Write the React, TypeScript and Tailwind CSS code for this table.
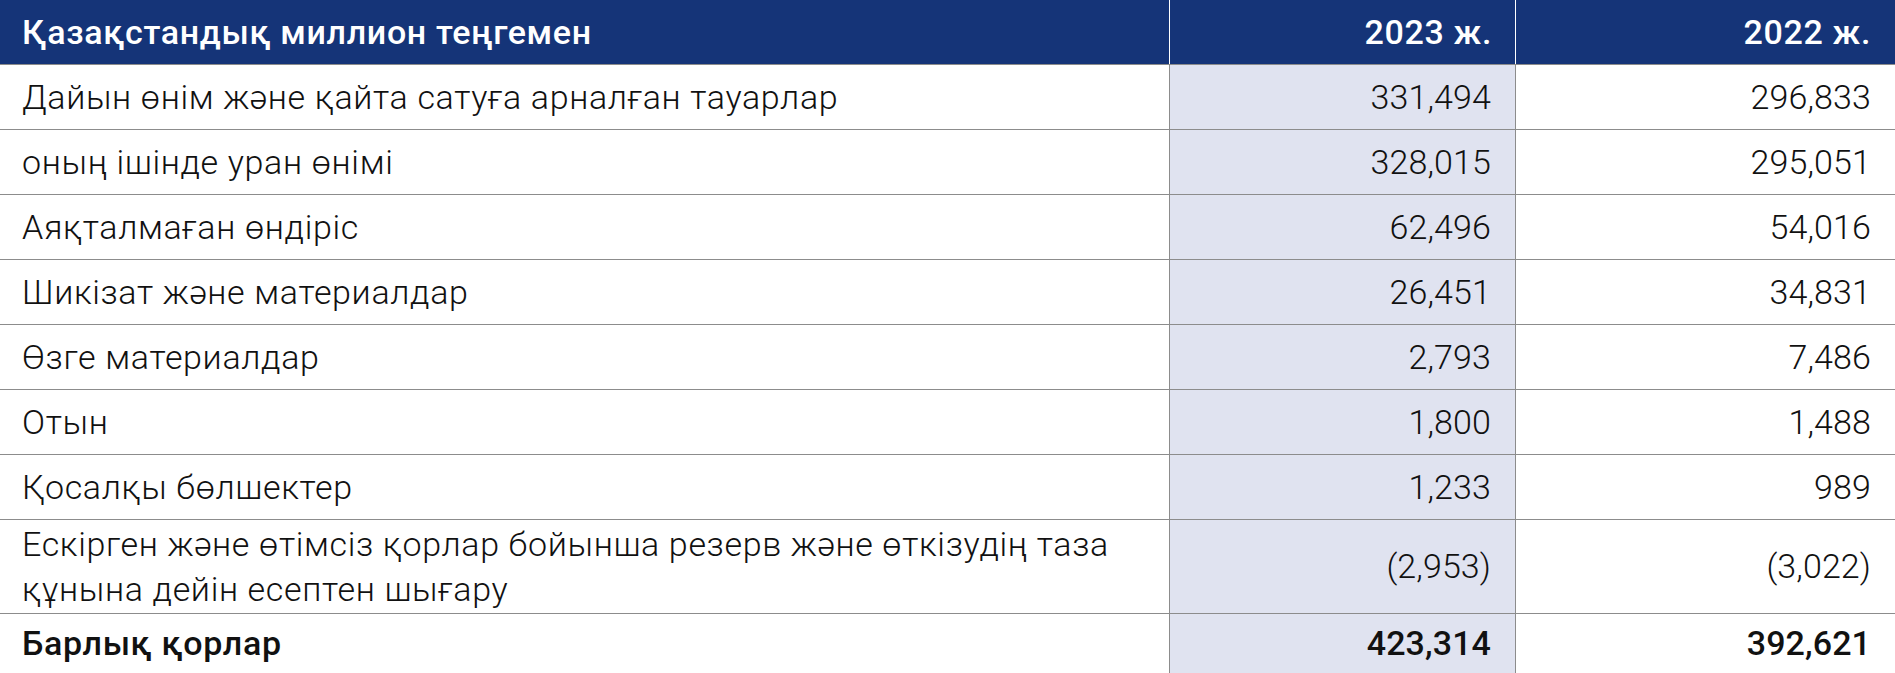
const ROWS = [
  { label: "Дайын өнім және қайта сатуға арналған тауарлар", y2023: "331,494", y2022: "296,833" },
  { label: "оның ішінде уран өнімі", y2023: "328,015", y2022: "295,051" },
  { label: "Аяқталмаған өндіріс", y2023: "62,496", y2022: "54,016" },
  { label: "Шикізат және материалдар", y2023: "26,451", y2022: "34,831" },
  { label: "Өзге материалдар", y2023: "2,793", y2022: "7,486" },
  { label: "Отын", y2023: "1,800", y2022: "1,488" },
  { label: "Қосалқы бөлшектер", y2023: "1,233", y2022: "989" },
];

const grid = "grid grid-cols-[1169px_346px_1fr]";

export default function App() {
  return (
    <div className="w-full bg-white font-['Roboto',sans-serif] text-[34px] leading-[45px] tracking-[0.65px] text-[#111]">
      <div className={`${grid} h-[65px] bg-[#153478] font-medium text-white border-b border-[#8c8c8c]`}>
        <div className="flex items-center pl-[22px]">Қазақстандық миллион теңгемен</div>
        <div className="flex items-center justify-end border-l border-white pr-[23px]">2023 ж.</div>
        <div className="flex items-center justify-end border-l border-white pr-[24px]">2022 ж.</div>
      </div>

      {ROWS.map((r) => (
        <div key={r.label} className={`${grid} h-[65px] border-b border-[#8c8c8c] font-light`}>
          <div className="flex items-center pl-[22px]">{r.label}</div>
          <div className="flex items-center justify-end border-l border-[#8c8c8c] bg-[#e0e3f0] pr-[24px] tracking-[0.1px]">
            {r.y2023}
          </div>
          <div className="flex items-center justify-end border-l border-[#8c8c8c] pr-[24px] tracking-[0.1px]">
            {r.y2022}
          </div>
        </div>
      ))}

      <div className={`${grid} h-[94px] border-b border-[#8c8c8c] font-light`}>
        <div className="flex items-center pl-[22px]">
          <span>
            Ескірген және өтімсіз қорлар бойынша резерв және өткізудің таза
            <br />
            құнына дейін есептен шығару
          </span>
        </div>
        <div className="flex items-center justify-end border-l border-[#8c8c8c] bg-[#e0e3f0] pr-[24px] tracking-[0.1px]">
          (2,953)
        </div>
        <div className="flex items-center justify-end border-l border-[#8c8c8c] pr-[24px] tracking-[0.1px]">
          (3,022)
        </div>
      </div>

      <div className={`${grid} h-[60px] border-b border-[#8c8c8c] font-medium`}>
        <div className="flex items-center pl-[22px]">Барлық қорлар</div>
        <div className="flex items-center justify-end border-l border-[#8c8c8c] bg-[#e0e3f0] pr-[24px] tracking-[0.1px]">
          423,314
        </div>
        <div className="flex items-center justify-end border-l border-[#8c8c8c] pr-[24px] tracking-[0.1px]">
          392,621
        </div>
      </div>
    </div>
  );
}
